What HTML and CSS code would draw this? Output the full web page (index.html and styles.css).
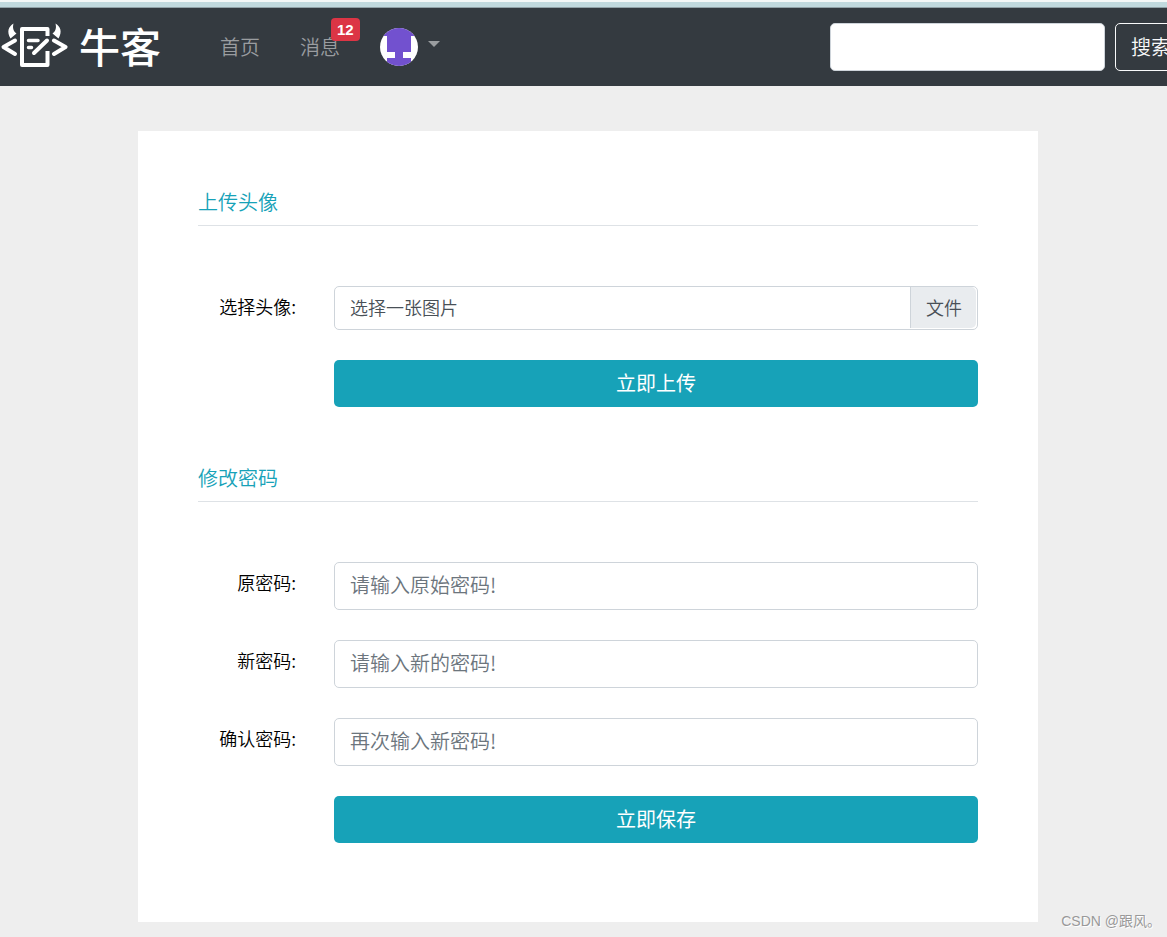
FILE: index.html
```html
<!DOCTYPE html>
<html lang="zh-CN">
<head>
<meta charset="utf-8">
<meta name="viewport" content="width=device-width, initial-scale=1">
<title>牛客</title>
<link rel="stylesheet" href="styles.css">
</head>
<body>
<div class="topline"></div>
<header class="navbar">
  <a class="brand" href="#">
    <svg class="brand-mark" width="68" height="46" viewBox="0 0 68 46" fill="none" stroke="#fff" stroke-width="4" stroke-linecap="round" stroke-linejoin="round" aria-hidden="true">
      <path d="M15 18.500 3.500 25 15 32"/>
      <path d="M54 18.500 65.500 25 54 32"/>
      <path stroke-linecap="butt" d="M47.500 14V7H22v36h25.500V29"/>
      <path d="M28.500 18.500H38M28.500 25.500H31.500" stroke-width="3.500"/>
      <path d="M34 31 47 18.500" stroke-width="4"/>
      <path stroke="none" fill="#fff" d="M13.500 1.500C8.500 4.500 6.500 9.500 10.500 16.500L16.500 11.500C13 9 12.500 5.500 13.500 1.500ZM55.500 1.500C60.500 4.500 62.500 9.500 58.500 16.500L52.500 11.500C56 9 56.500 5.500 55.500 1.500Z"/>
    </svg>
    <span class="brand-name">牛客</span>
  </a>
  <nav class="menu" aria-label="主导航">
    <a class="menu-link" href="#">首页</a>
    <a class="menu-link" href="#">消息<span class="badge">12</span></a>
    <button class="user" type="button" aria-label="用户菜单">
      <svg width="38" height="38" viewBox="0 0 38 38" aria-hidden="true">
        <defs><clipPath id="round"><circle cx="19" cy="19" r="19"/></clipPath></defs>
        <g clip-path="url(#round)">
          <path fill="#fff" d="M0 0h38v38H0z"/>
          <path fill="#7251cf" d="M0 0h38v8h-7v16h-8v6h8v8H7v-8h8v-6H7V8H0z"/>
        </g>
      </svg>
      <span class="caret"></span>
    </button>
  </nav>
  <form class="search">
    <input class="search-box" type="search" aria-label="搜索内容">
    <button class="search-button" type="button">搜索</button>
  </form>
</header>
<main class="main">
  <div class="card">
    <section class="section">
      <h1 class="title">上传头像</h1>
      <form class="form">
        <label class="label" for="avatar">选择头像:</label>
        <div class="file">
          <input class="file-input" id="avatar" type="file">
          <span class="file-text">选择一张图片</span>
          <span class="file-button">文件</span>
        </div>
        <button class="submit" type="button">立即上传</button>
      </form>
    </section>
    <section class="section">
      <h2 class="title">修改密码</h2>
      <form class="form">
        <label class="label" for="old">原密码:</label>
        <input class="field" id="old" type="password" placeholder="请输入原始密码!">
        <label class="label" for="new">新密码:</label>
        <input class="field" id="new" type="password" placeholder="请输入新的密码!">
        <label class="label" for="confirm">确认密码:</label>
        <input class="field" id="confirm" type="password" placeholder="再次输入新密码!">
        <button class="submit" type="button">立即保存</button>
      </form>
    </section>
  </div>
</main>
<p class="credit">CSDN @跟风。</p>
</body>
</html>
```
FILE: styles.css
```css
* { box-sizing: border-box; }
body {
  margin: 0;
  background: #eee;
  color: #212529;
  font-family: "Noto Sans CJK SC", sans-serif;
  font-weight: 350;
  font-size: 20px;
  line-height: 30px;
  overflow-x: hidden;
}
a { color: inherit; text-decoration: none; }
input, button { font: inherit; }

.topline {
  height: 8px;
  background: #c1d9de;
  border-top: 2px solid #f4f7f7;
  border-bottom: 1px solid #90a1a7;
}
.navbar {
  display: flex;
  align-items: center;
  height: 78px;
  background: #343a40;
  overflow: hidden;
}
.brand { display: flex; align-items: center; gap: 11px; padding-bottom: 4px; color: #fff; }
.brand-name { font-size: 41px; line-height: 46px; font-weight: 500; }
.menu {
  display: flex;
  align-items: center;
  gap: 40px;
  margin-left: 59px;
  color: #9a9da0;
}
.menu-link { position: relative; white-space: nowrap; }
.badge {
  position: absolute;
  left: 31px;
  top: -14px;
  padding: 0 6px;
  border-radius: 4px;
  background: #dc3545;
  color: #fff;
  font: bold 15px/23px "Liberation Sans", sans-serif;
}
.user {
  display: flex;
  align-items: center;
  gap: 10px;
  padding: 0;
  border: 0;
  background: none;
  color: inherit;
}
.caret {
  margin-bottom: 6px;
  border: 6px solid transparent;
  border-top-color: currentColor;
  border-bottom: 0;
}
.search {
  display: flex;
  flex: none;
  gap: 10px;
  margin-left: auto;
  margin-right: -20px;
}
.search-box {
  width: 275px;
  height: 48px;
  padding: 0 15px;
  border: 1px solid #ced4da;
  border-radius: 5px;
  background: #fff;
}
.search-button {
  width: 72px;
  padding: 0 15px;
  border: 1px solid #f8f9fa;
  border-radius: 5px;
  background: none;
  color: #f8f9fa;
  white-space: nowrap;
}

.main { padding: 45px 0 15px 9px; }
.card {
  max-width: 900px;
  margin: 0 auto;
  padding: 57px 60px 79px;
  background: #fff;
}
.section + .section { margin-top: 57px; }
.title {
  margin: 0 0 60px;
  padding-bottom: 9px;
  border-bottom: 1px solid #dee2e6;
  color: #17a2b8;
  font-size: 20px;
  line-height: 28px;
  font-weight: 350;
}
.form {
  display: grid;
  grid-template-columns: 98px 1fr;
  column-gap: 38px;
  row-gap: 30px;
}
.label {
  font-size: 18px;
  line-height: 40px;
  text-align: right;
  color: #000;
}
.field {
  width: 100%;
  height: 48px;
  padding: 0 15px 3px;
  border: 1px solid #ced4da;
  border-radius: 5px;
  background: #fff;
  color: #495057;
}
.field::placeholder { color: #6c757d; opacity: 1; }
.file {
  position: relative;
  display: flex;
  justify-content: space-between;
  height: 44px;
  padding: 0 1px 1px 15px;
  border: 1px solid #ced4da;
  border-radius: 5px;
  color: #495057;
  font-size: 18px;
  line-height: 40px;
}
.file-input { position: absolute; inset: 0; width: 100%; height: 100%; opacity: 0; }
.file-button {
  padding: 0 14px 0 15px;
  border-left: 1px solid #ced4da;
  border-radius: 0 5px 5px 0;
  background: #e9ecef;
}
.submit {
  grid-column: 2;
  height: 47px;
  padding: 0 0 2px;
  border: 0;
  border-radius: 5px;
  background: #17a2b8;
  color: #fff;
  font-weight: 400;
}
.credit {
  position: absolute;
  right: 6px;
  top: 911px;
  margin: 0;
  color: #999;
  font: 14px/20px "Liberation Sans", "Noto Sans CJK SC", sans-serif;
  text-shadow: 1px 1px 0 #fff;
}
```
